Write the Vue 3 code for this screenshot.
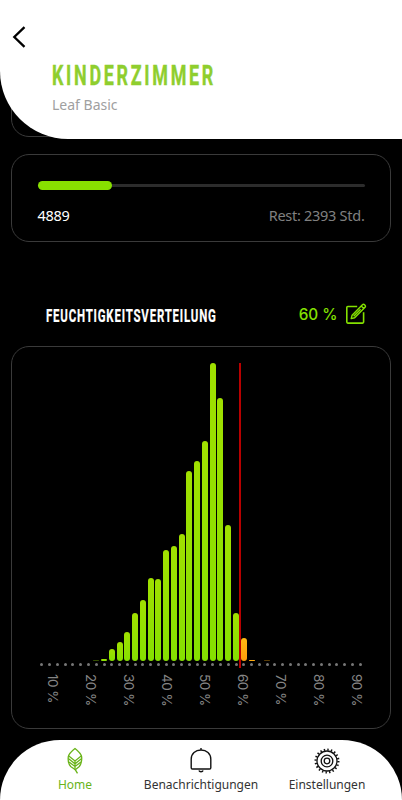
<template>
  <div class="screen">
    <header class="header">
      <button class="back" aria-label="Zurück">
        <svg width="14" height="22" viewBox="0 0 14 22"><path d="M12.5 1.2 2.3 11l10.2 9.8" fill="none" stroke="#000" stroke-width="2.3" /></svg>
      </button>
      <svg class="title" width="180" height="34">
        <g transform="scale(0.64 1)">
          <text x="0" y="26" textLength="252" lengthAdjust="spacing">KINDERZIMMER</text>
        </g>
      </svg>
      <p class="subtitle">Leaf Basic</p>
    </header>

    <main class="content">
      <section class="card hidden-card"></section>

      <section class="card filter-card">
        <div class="track">
          <div class="fill" :style="{ width: filterPercent + '%' }"></div>
        </div>
        <div class="filter-info">
          <span class="used">4889</span>
          <span class="rest">Rest: 2393 Std.</span>
        </div>
      </section>

      <div class="section-head">
        <svg class="section-title" width="180" height="24">
          <g transform="scale(0.62 1)">
            <text x="0" y="20" textLength="274" lengthAdjust="spacing">FEUCHTIGKEITSVERTEILUNG</text>
          </g>
        </svg>
        <div class="target">
          <span>60 %</span>
          <svg width="22" height="22" viewBox="0 0 22 22" fill="none" stroke="#84e100" stroke-width="1.6" stroke-linejoin="round">
            <path d="M12.2 3.5H2.8a1 1 0 0 0-1 1v14.6a1 1 0 0 0 1 1h14.8a1 1 0 0 0 1-1V9.2" />
            <path d="M7.1 12.2 16.2 3l2.6 2.6-9.1 9.1-3.5.9zM16.2 3l1-1a1.4 1.4 0 0 1 2.6 2.6l-1 1M8.6 13.3l7-7" stroke-width="1.4" />
          </svg>
        </div>
      </div>

      <section class="card chart-card">
        <div class="plot">
          <div class="bars">
            <div v-for="(bar, i) in bars" :key="i" class="slot">
              <div v-if="bar" class="bar" :class="{ high: i > 25, faint: i === 7 || i === 29 }" :style="{ height: bar + 'px' }"></div>
            </div>
          </div>
          <div class="dots">
            <span v-for="(bar, i) in bars" :key="i" class="slot"><i class="dot"></i></span>
          </div>
          <div class="limit"></div>
        </div>
        <div class="labels">
          <span v-for="n in 9" :key="n">{{ n * 10 }} %</span>
        </div>
      </section>
    </main>

    <nav class="nav">
      <a class="tab home active">
        <svg width="26" height="28" viewBox="0 0 26 28" fill="none" stroke="#6ab41a" stroke-width="1.3">
          <path d="M13 1.5C10.2 3.7 6.8 7 6.3 9.7c-.5 4.1.5 7.7 2.4 9.8l4.6 3.2 4-3.2c1.9-2.6 2.8-5.7 2.3-9.8C19.1 7 15.8 3.7 13 1.5z" />
          <path d="M6.5 8.7 13 14l6.5-5.3M6.3 11.5l6.7 5.3 6.7-5.3M7 15l6 4.4 6-4.4M13 14v8.2l2.5 4.2" />
        </svg>
        <span>Home</span>
      </a>
      <a class="tab alerts">
        <svg width="26" height="28" viewBox="0 0 26 28" fill="none" stroke="#111" stroke-width="1.4">
          <path d="M3.2 12.2C3.2 6.6 7.4 3 13 3s9.8 3.6 9.8 9.2v8.6a1.2 1.2 0 0 1-1.2 1.2H4.4a1.2 1.2 0 0 1-1.2-1.2zM10.9 23.6c.6 1.6 3.6 1.6 4.2 0M13 3V1" />
        </svg>
        <span>Benachrichtigungen</span>
      </a>
      <a class="tab settings">
        <svg width="28" height="28" viewBox="0 0 28 28" fill="none" stroke="#111">
          <circle cx="14" cy="14" r="11.4" stroke-width="2.2" stroke-dasharray="1.4 2.18" />
          <circle cx="14" cy="14" r="10" stroke-width="1.3" />
          <circle cx="14" cy="14" r="5.8" stroke-width="1.3" />
          <circle cx="14" cy="14" r="2.8" stroke-width="1.3" />
        </svg>
        <span>Einstellungen</span>
      </a>
    </nav>
  </div>
</template>

<script setup>
const filterPercent = 22.8

// bar heights in px, one entry per dot on the axis
const bars = [
  0, 0, 0, 0, 0, 0, 0, 1, 2, 12, 18.7, 28.7, 47.4, 60.7, 82.4, 81.7, 110.7, 114.7, 126.7, 189.7, 199.7,
  219.4, 297.4, 262.7, 135.7, 47.7, 23, 1, 0, 1, 0, 0, 0, 0, 0, 0, 0, 0, 0, 0, 0, 0,
]
</script>

<style>
body {
  margin: 0;
  background: #000;
}
</style>

<style scoped>
.screen {
  position: relative;
  width: 402px;
  height: 800px;
  overflow: hidden;
  background: #000;
  font-family: "Noto Sans", "Open Sans", sans-serif;
}
.header {
  position: absolute;
  top: 0;
  left: 0;
  z-index: 2;
  box-sizing: border-box;
  width: 402px;
  height: 139px;
  padding: 26px 0 0 12px;
  background: #fff;
  border-bottom-left-radius: 68px;
}
.back {
  display: block;
  height: 22px;
  padding: 0;
  border: none;
  background: none;
}
.title {
  display: block;
  margin: 11px 0 0 40px;
  overflow: visible;
  fill: #8fce2e;
  stroke: #8fce2e;
  stroke-width: 0.4px;
  font: 700 28px Roboto, sans-serif;
}
.subtitle {
  margin: 2px 0 0 40px;
  color: #a0a0a0;
  font-size: 14px;
  line-height: 20px;
}
.content {
  display: flex;
  flex-direction: column;
  padding: 0 11px;
}
.card {
  box-sizing: border-box;
  border: 1px solid #3a3a3a;
  border-radius: 18px;
}
.hidden-card {
  height: 77px;
  margin-top: 60px;
}
.filter-card {
  height: 88px;
  margin-top: 17px;
  padding: 29px 25.5px 0;
}
.track {
  display: flex;
  align-items: center;
  height: 3px;
  border-radius: 2px;
  background: #2c2c2c;
}
.fill {
  height: 9px;
  border-radius: 5px;
  background: #88e000;
}
.filter-info {
  display: flex;
  justify-content: space-between;
  margin-top: 18px;
  font-size: 14.5px;
  letter-spacing: -0.28px;
  line-height: 20px;
}
.used {
  color: #fff;
}
.rest {
  color: #808080;
}
.section-head {
  display: flex;
  justify-content: space-between;
  align-items: center;
  height: 24px;
  margin: 60px 24.5px 0 34.5px;
}
.section-title {
  overflow: visible;
  fill: #fff;
  stroke: #fff;
  stroke-width: 0.2px;
  font: 700 18.5px Roboto, sans-serif;
}
.target {
  display: flex;
  align-items: center;
  gap: 7px;
  color: #84e100;
  font: 500 15.3px Inter, sans-serif;
}
.chart-card {
  height: 383px;
  margin-top: 20px;
  padding: 15.5px 25px 0 26px;
}
.plot {
  position: relative;
  height: 304px;
}
.bars {
  display: flex;
  align-items: flex-end;
  height: 298px;
}
.slot {
  display: flex;
  flex: none;
  justify-content: center;
  width: 7.78px;
}
.bar {
  width: 6px;
  border-radius: 3px;
  background: linear-gradient(to top, #85e000, #a0e000);
}
.bar.high {
  background: linear-gradient(to top, #ff9d0c, #ffba12);
}
.bar.faint {
  opacity: 0.35;
}
.dots {
  display: flex;
  margin-top: 2px;
}
.dot {
  width: 3px;
  height: 3px;
  border-radius: 50%;
  background: #777;
}
.limit {
  position: absolute;
  top: 0;
  left: 201.2px;
  width: 1.5px;
  height: 305px;
  background: #b80000;
}
.labels {
  display: flex;
  margin: 7px 0 0 -4px;
}
.labels span {
  flex: none;
  width: 38px;
  color: #858585;
  font: 13.5px/38px Inter, sans-serif;
  letter-spacing: -0.5px;
  writing-mode: vertical-rl;
}
.nav {
  position: absolute;
  bottom: 0;
  left: 0;
  z-index: 2;
  display: flex;
  box-sizing: border-box;
  width: 402px;
  height: 60px;
  padding: 7px 12px 0;
  border-radius: 60px 60px 0 0;
  background: #fff;
}
.tab {
  display: flex;
  flex: 1;
  flex-direction: column;
  align-items: center;
  color: #333;
  font-size: 12px;
  line-height: 20px;
  white-space: nowrap;
}
.active {
  color: #6ab41a;
}
</style>
